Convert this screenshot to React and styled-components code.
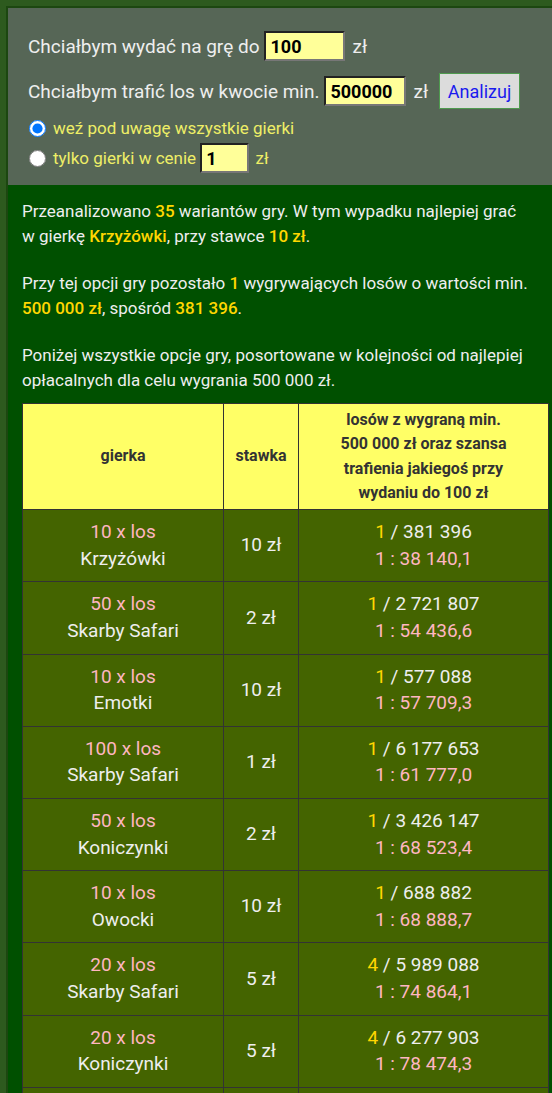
import React from "react";
import styled, { createGlobalStyle } from "styled-components";

const GlobalStyle = createGlobalStyle`
  html, body {
    margin: 0;
    padding: 0;
    background: #2d5a1e;
    overflow-x: hidden;
  }
  body {
    font-family: Roboto, "Liberation Sans", Arial, sans-serif;
  }
`;

const Page = styled.div`
  padding: 6px 0 0 6px;
`;

const Frame = styled.div`
  box-sizing: border-box;
  width: 557px;
  border-left: 2px solid #1c4710;
  border-top: 2px solid #1c4710;
  background: #005000;
`;

const Panel = styled.form`
  background: #566656;
  padding: 15px 20px 12px;
  color: #eeeeee;
`;

const Row = styled.div`
  display: flex;
  align-items: center;
  height: ${(props) => props.height || "30px"};
  font-size: ${(props) => props.size || "19px"};
  color: ${(props) => props.color || "#eeeeee"};
  gap: ${(props) => props.gap || "5px"};
  ${(props) => props.indent && `padding-left: ${props.indent};`}
`;

const Field = styled.input`
  box-sizing: border-box;
  width: ${(props) => props.width || "81px"};
  height: 30px;
  padding: 0 4px;
  background: #ffff99;
  border: 2px solid;
  border-color: #222 #777 #777 #222;
  font-family: inherit;
  font-size: 18px;
  font-weight: bold;
  color: #000;
  outline: none;
`;

const Unit = styled.span`
  margin-left: 2px;
`;

const Button = styled.button`
  margin-left: 6px;
  width: 81px;
  height: 36px;
  background: #dcdcdc;
  border: 1px solid #4f9a4f;
  color: #1a1aee;
  font-family: inherit;
  font-size: 18px;
  cursor: pointer;
`;

const Radio = styled.input`
  width: 17px;
  height: 17px;
  margin: 0 7px 0 0;
`;

const Content = styled.div`
  padding: 14px 14px 0;
  color: #eeeeee;
  font-size: 17px;
  line-height: 25px;
`;

const Para = styled.p`
  margin: 0 0 ${(props) => (props.$last ? "10px" : "22px")};
  width: 508px;
`;

const Hi = styled.span`
  color: #ffd700;
  font-weight: 500;
`;

const Table = styled.table`
  width: 100%;
  border-collapse: collapse;
  table-layout: fixed;
`;

const Th = styled.th`
  background: #ffff66;
  color: #333;
  font-size: 16px;
  font-weight: bold;
  line-height: 24.3px;
  padding: 4px 6px;
  border: 1px solid #333;
  text-align: center;
  vertical-align: middle;
`;

const Td = styled.td`
  background: #446400;
  color: #eeeeee;
  font-size: 19px;
  line-height: 26.6px;
  padding: 9px 6px;
  border: 1px solid #333;
  text-align: center;
  vertical-align: middle;
`;

const Pink = styled.span`
  color: #ffb6c1;
`;

const Gold = styled.span`
  color: #ffd700;
`;

const rows = [
  ["10", "Krzyżówki", "10 zł", "1", "381 396", "38 140,1"],
  ["50", "Skarby Safari", "2 zł", "1", "2 721 807", "54 436,6"],
  ["10", "Emotki", "10 zł", "1", "577 088", "57 709,3"],
  ["100", "Skarby Safari", "1 zł", "1", "6 177 653", "61 777,0"],
  ["50", "Koniczynki", "2 zł", "1", "3 426 147", "68 523,4"],
  ["10", "Owocki", "10 zł", "1", "688 882", "68 888,7"],
  ["20", "Skarby Safari", "5 zł", "4", "5 989 088", "74 864,1"],
  ["20", "Koniczynki", "5 zł", "4", "6 277 903", "78 474,3"],
  ["20", "Emotki", "5 zł", "3", "4 712 560", "80 312,5"],
];

export default function App() {
  return (
    <>
      <GlobalStyle />
      <Page>
        <Frame>
          <Panel onSubmit={(e) => e.preventDefault()}>
            <Row height="46px">
              Chciałbym wydać na grę do
              <Field defaultValue="100" />
              <Unit>zł</Unit>
            </Row>
            <Row height="44px">
              Chciałbym trafić los w kwocie min.
              <Field defaultValue="500000" width="82px" />
              <Unit>zł</Unit>
              <Button type="submit">Analizuj</Button>
            </Row>
            <Row size="17px" color="#eeee66" indent="1px" gap="0">
              <Radio type="radio" name="mode" defaultChecked />
              weź pod uwagę wszystkie gierki
            </Row>
            <Row size="17px" color="#eeee66" indent="1px" gap="0">
              <Radio type="radio" name="mode" />
              tylko gierki w cenie&nbsp;
              <Field defaultValue="1" width="49px" />
              <Unit>&nbsp;zł</Unit>
            </Row>
          </Panel>
          <Content>
            <Para>
              Przeanalizowano <Hi>35</Hi> wariantów gry. W tym wypadku najlepiej grać
              w gierkę <Hi>Krzyżówki</Hi>, przy stawce <Hi>10 zł</Hi>.
            </Para>
            <Para>
              Przy tej opcji gry pozostało <Hi>1</Hi> wygrywających losów o wartości
              min. <Hi>500 000 zł</Hi>, spośród <Hi>381 396</Hi>.
            </Para>
            <Para $last>
              Poniżej wszystkie opcje gry, posortowane w kolejności od najlepiej
              opłacalnych dla celu wygrania 500 000 zł.
            </Para>
            <Table>
              <colgroup>
                <col style={{ width: "201px" }} />
                <col style={{ width: "75px" }} />
                <col />
              </colgroup>
              <thead>
                <tr>
                  <Th>gierka</Th>
                  <Th>stawka</Th>
                  <Th>
                    losów z wygraną min.
                    <br />
                    500 000 zł oraz szansa
                    <br />
                    trafienia jakiegoś przy
                    <br />
                    wydaniu do 100 zł
                  </Th>
                </tr>
              </thead>
              <tbody>
                {rows.map(([count, name, stake, left, total, odds], i) => (
                  <tr key={i}>
                    <Td>
                      <Pink>{count} x los</Pink>
                      <br />
                      {name}
                    </Td>
                    <Td>{stake}</Td>
                    <Td>
                      <Gold>{left}</Gold> / {total}
                      <br />
                      <Pink>1 : {odds}</Pink>
                    </Td>
                  </tr>
                ))}
              </tbody>
            </Table>
          </Content>
        </Frame>
      </Page>
    </>
  );
}
